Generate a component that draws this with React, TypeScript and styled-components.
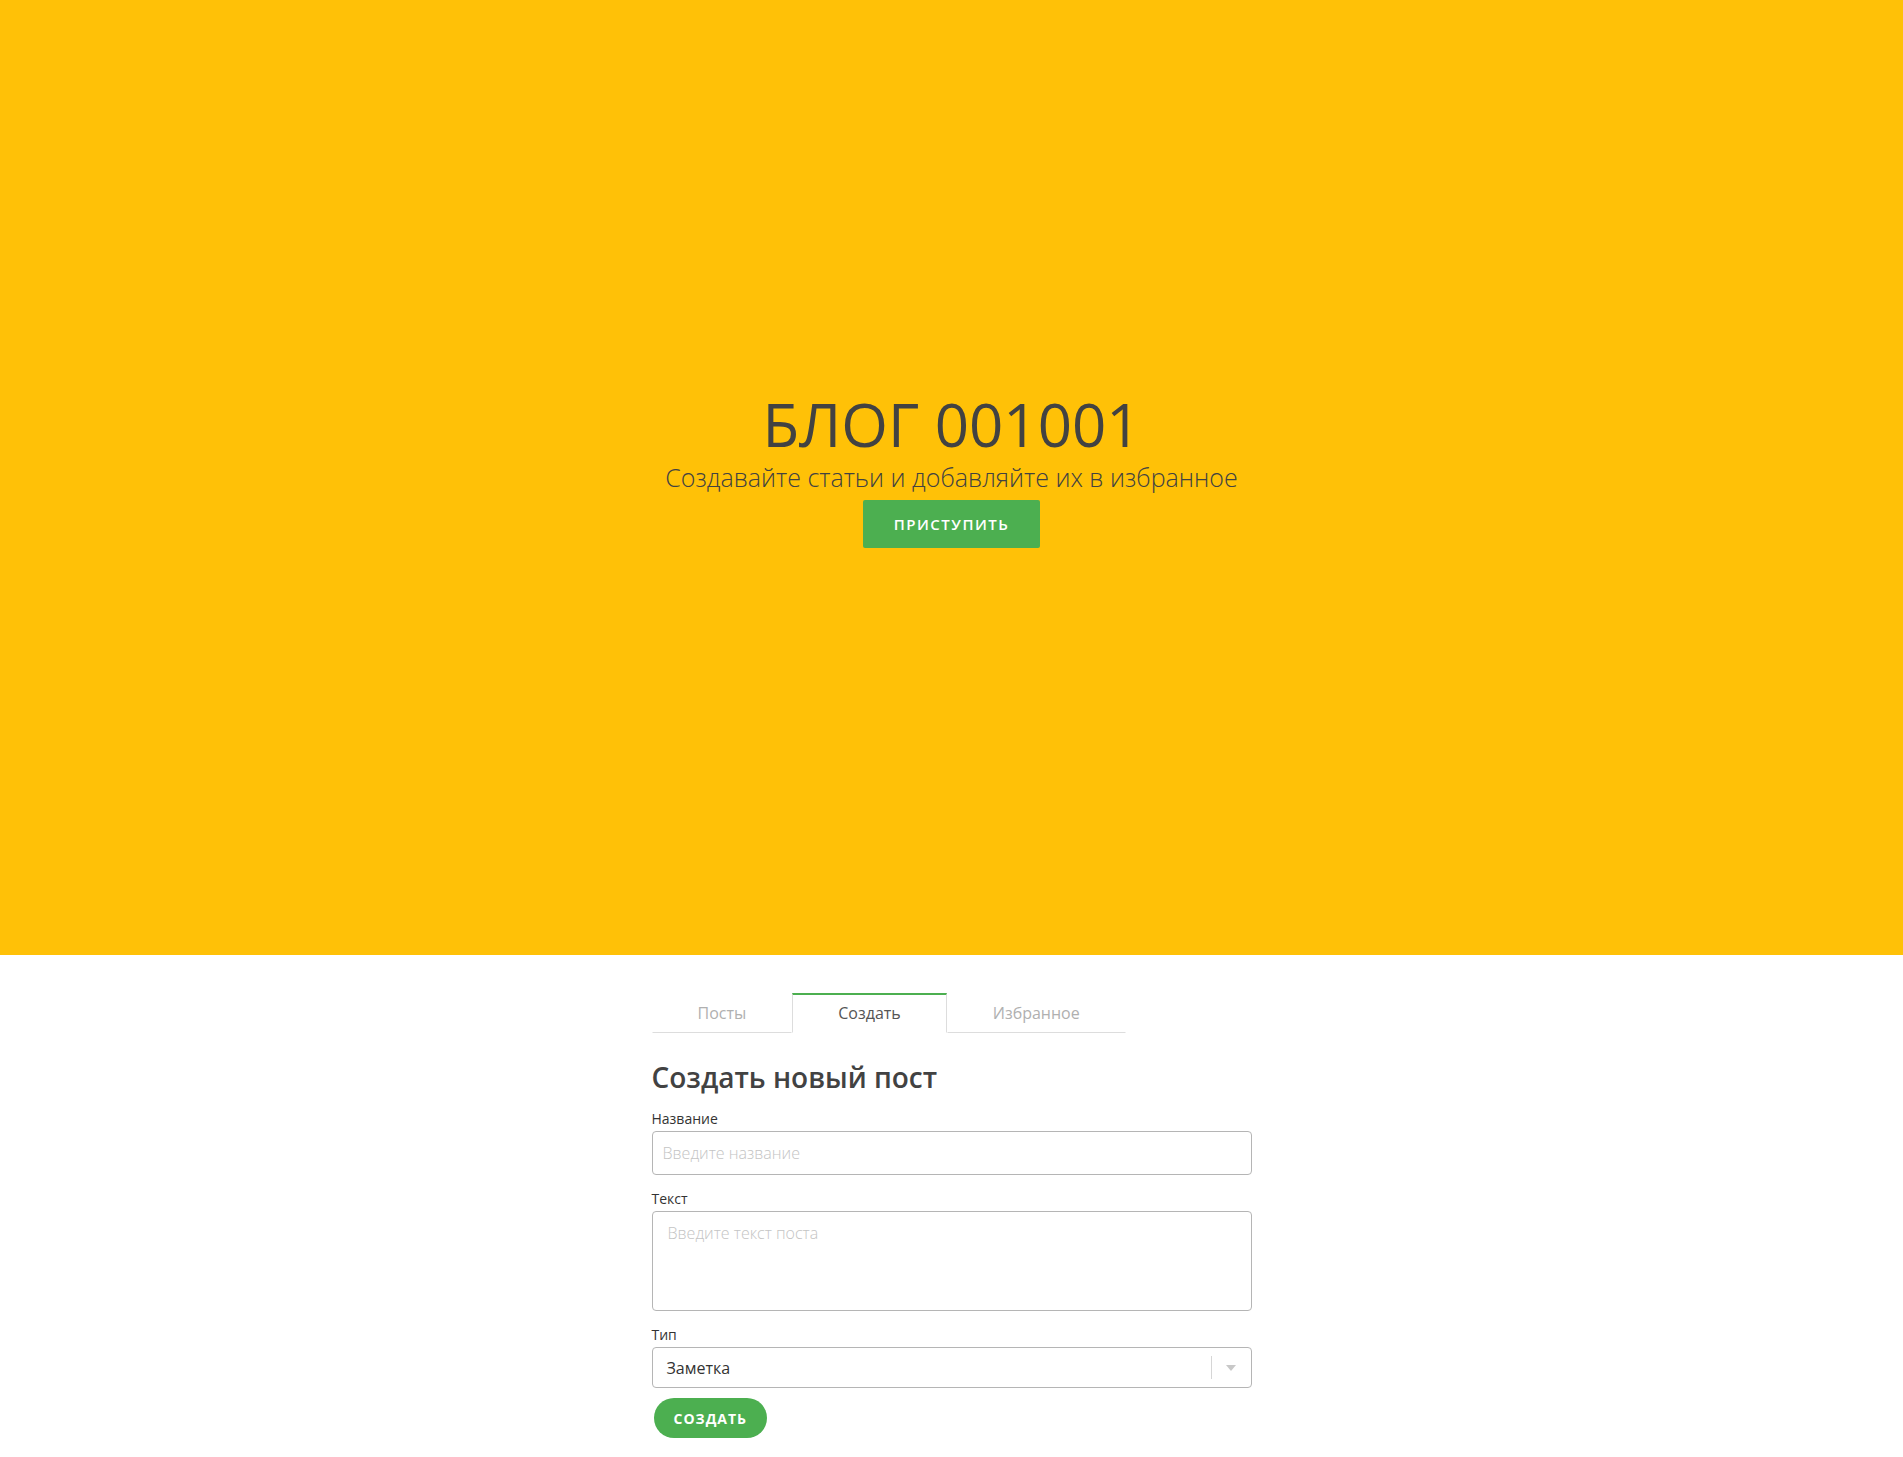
import React from "react";
import styled, { createGlobalStyle } from "styled-components";

const GlobalStyle = createGlobalStyle`
  html, body {
    margin: 0;
    padding: 0;
    background: #ffffff;
    font-family: "Open Sans", "Noto Sans", Arial, sans-serif;
    color: #424242;
  }
  * { box-sizing: border-box; }
`;

const Hero = styled.header`
  height: 955px;
  background: #ffc107;
  display: flex;
  flex-direction: column;
  align-items: center;
  justify-content: center;
  padding-bottom: 14px;
`;

const Title = styled.h1`
  margin: 0;
  font-size: 60px;
  line-height: 60px;
  font-weight: 400;
  color: #424242;
`;

const Subtitle = styled.p`
  margin: 8px 0 0;
  font-size: 25px;
  line-height: 30px;
  font-weight: 300;
  color: #424242;
`;

const PrimaryButton = styled.button<{ $round?: boolean }>`
  border: none;
  cursor: pointer;
  background: #4caf50;
  color: #ffffff;
  font-family: "Open Sans", Arial, sans-serif;
  font-weight: 600;
  text-transform: uppercase;
  letter-spacing: 1px;
  border-radius: ${(p) => (p.$round ? "20px" : "2px")};
`;

const StartButton = styled(PrimaryButton)`
  margin-top: 8px;
  height: 48px;
  padding: 0 31px;
  font-size: 15px;
  letter-spacing: 1.5px;
`;

const Main = styled.main`
  width: 600px;
  margin: 0 auto;
  padding: 38px 0 19px;
`;

const TabBar = styled.nav`
  display: flex;
`;

const Tab = styled.div<{ $active?: boolean }>`
  height: 40px;
  padding: 0 45px;
  line-height: 37px;
  font-size: 16px;
  font-weight: 400;
  cursor: pointer;
  color: ${(p) => (p.$active ? "#555555" : "#b0b0b0")};
  background: #ffffff;
  border-top: 2px solid ${(p) => (p.$active ? "#4caf50" : "transparent")};
  border-left: 1px solid ${(p) => (p.$active ? "#dddddd" : "transparent")};
  border-right: 1px solid ${(p) => (p.$active ? "#dddddd" : "transparent")};
  border-bottom: 1px solid ${(p) => (p.$active ? "transparent" : "#dddddd")};
`;

const Heading = styled.h2`
  margin: 27px 0 0;
  font-size: 28px;
  line-height: 34px;
  font-weight: 600;
  color: #424242;
`;

const Form = styled.form`
  display: flex;
  flex-direction: column;
`;

const Field = styled.div`
  display: flex;
  flex-direction: column;
  margin-top: 14px;
  &:first-child { margin-top: 15px; }
`;

const Label = styled.label`
  font-size: 14px;
  line-height: 20px;
  font-weight: 400;
  color: #333333;
  margin-bottom: 2px;
`;

const controlBase = `
  width: 100%;
  border: 1px solid #b5b5b5;
  border-radius: 4px;
  background: #ffffff;
  font-family: "Open Sans", Arial, sans-serif;
  font-size: 16px;
  font-weight: 300;
  color: #333333;
  outline: none;
  &::placeholder { color: #c4c4c4; font-weight: 300; }
`;

const TextInput = styled.input`
  ${controlBase}
  height: 44px;
  padding: 0 10px;
`;

const TextArea = styled.textarea`
  ${controlBase}
  height: 100px;
  padding: 10px 15px;
  resize: none;
  display: block;
`;

const SelectControl = styled.div`
  height: 41px;
  border: 1px solid #b5b5b5;
  border-radius: 4px;
  display: flex;
  align-items: center;
  background: #ffffff;
`;

const SelectValue = styled.div`
  flex: 1;
  padding-left: 14px;
  font-size: 16px;
  font-weight: 400;
  color: #333333;
`;

const Separator = styled.span`
  align-self: stretch;
  width: 1px;
  margin: 8px 0;
  background: #d6d6d6;
`;

const Indicator = styled.span`
  width: 39px;
  display: flex;
  align-items: center;
  justify-content: center;
  color: #c8c8c8;
`;

const SubmitButton = styled(PrimaryButton)`
  align-self: flex-start;
  margin: 10px 0 0 2px;
  height: 40px;
  padding: 0 20px;
  font-size: 14px;
  font-weight: 700;
`;

export default function App() {
  return (
    <>
      <GlobalStyle />
      <Hero>
        <Title>БЛОГ 001001</Title>
        <Subtitle>Создавайте статьи и добавляйте их в избранное</Subtitle>
        <StartButton>Приступить</StartButton>
      </Hero>
      <Main>
        <TabBar>
          <Tab>Посты</Tab>
          <Tab $active>Создать</Tab>
          <Tab>Избранное</Tab>
        </TabBar>
        <Heading>Создать новый пост</Heading>
        <Form onSubmit={(e) => e.preventDefault()}>
          <Field>
            <Label>Название</Label>
            <TextInput placeholder="Введите название" />
          </Field>
          <Field>
            <Label>Текст</Label>
            <TextArea placeholder="Введите текст поста" />
          </Field>
          <Field>
            <Label>Тип</Label>
            <SelectControl>
              <SelectValue>Заметка</SelectValue>
              <Separator />
              <Indicator>
                <svg width="10" height="6" viewBox="0 0 10 6">
                  <path d="M0 0 L10 0 L5 6 Z" fill="currentColor" />
                </svg>
              </Indicator>
            </SelectControl>
          </Field>
          <SubmitButton $round type="submit">Создать</SubmitButton>
        </Form>
      </Main>
    </>
  );
}
